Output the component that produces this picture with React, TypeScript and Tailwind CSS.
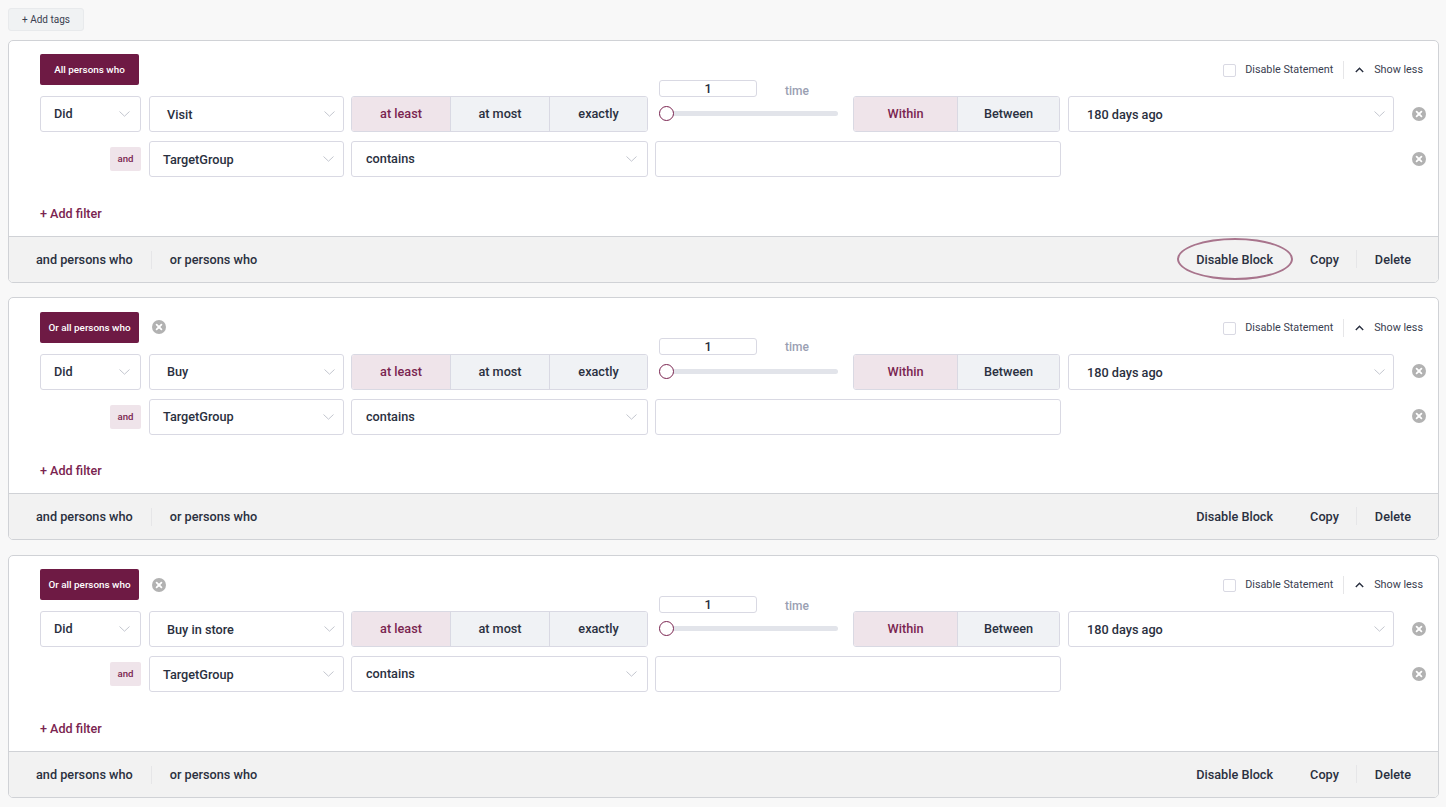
import React from "react";

function Chevron({ className = "" }: { className?: string }) {
  return (
    <svg width="11" height="6" viewBox="0 0 11 6" fill="none" className={className}>
      <path d="M0.5 0.5 L5.5 5.2 L10.5 0.5" stroke="#c3c6cf" strokeWidth="1" />
    </svg>
  );
}

function XCircle({ shift = "" }: { shift?: string }) {
  return (
    <svg width="14" height="14" viewBox="0 0 14 14" className={`shrink-0 ${shift}`}>
      <circle cx="7" cy="7" r="7" fill="#b2b2b2" />
      <path d="M4.6 4.6 L9.4 9.4 M9.4 4.6 L4.6 9.4" stroke="#fff" strokeWidth="1.8" strokeLinecap="round" />
    </svg>
  );
}

function Select({
  label,
  width,
  pad,
  shift = "",
  chevron = "pr-[8px]",
}: {
  label: string;
  width: string;
  pad: string;
  shift?: string;
  chevron?: string;
}) {
  return (
    <div className={`${width} ${pad} ${chevron} h-[36px] shrink-0 bg-white border border-[#d9d9e3] rounded-[3px] flex items-center justify-between`}>
      <span className={`text-[12.7px] font-medium text-[#2a3040] ${shift}`}>{label}</span>
      <Chevron />
    </div>
  );
}

function Segment({ items, widths }: { items: string[]; widths: string[] }) {
  return (
    <div className="flex h-[36px] shrink-0 rounded-[3px] border border-[#d9d9e3] overflow-hidden">
      {items.map((it, i) => (
        <div
          key={it}
          className={`${widths[i]} flex items-center justify-center text-[12.7px] font-medium ${i > 0 ? "border-l border-[#d9d9e3]" : ""} ${i === 0 ? "bg-[#efe4ea] text-[#7a2450]" : "bg-[#f0f2f5] text-[#2a3040]"}`}
        >
          {it}
        </div>
      ))}
    </div>
  );
}

function Divider() {
  return <div className="w-px h-[18px] bg-[#e6e6e8]" />;
}

function Card({
  badge,
  removable,
  event,
  mt,
  top,
  filterMt,
  sliderTop,
  sliderGap,
  timeShift,
  textShift,
  xShift = "",
  highlight,
}: {
  badge: string;
  removable?: boolean;
  event: string;
  mt: string;
  top: string;
  filterMt: string;
  sliderTop: string;
  sliderGap: string;
  timeShift: string;
  textShift: string;
  xShift?: string;
  highlight?: boolean;
}) {
  return (
    <div className={`${mt} h-[243px] rounded-[5px] border border-[#d0d2d6] bg-white overflow-hidden flex flex-col`}>
      <div className={`${top} h-[195px] shrink-0 pl-[31px] pr-[12px] flex flex-col`}>
        <div className="h-[31px] flex items-center">
          <div className="w-[99px] h-[31px] pt-px rounded-[2px] bg-[#6e1a44] text-white text-[9.9px] font-medium flex items-center justify-center">
            {badge}
          </div>
          {removable && (
            <div className="ml-[13px]">
              <XCircle shift={xShift} />
            </div>
          )}
          <div className="ml-auto mr-[3px] flex items-center">
            <div className="w-[13px] h-[13px] border border-[#d9d9e3] rounded-[2px] bg-white mt-px" />
            <span className="ml-[9px] text-[10.8px] text-[#3a4050] mt-px">Disable Statement</span>
            <div className="w-px h-[18px] bg-[#e6e6e8] ml-[10px] mr-[11px]" />
            <svg width="9" height="6" viewBox="0 0 9 6" fill="none">
              <path d="M0.8 5 L4.5 1.3 L8.2 5" stroke="#2a3040" strokeWidth="1.4" />
            </svg>
            <span className="ml-[10px] text-[10.8px] text-[#3a4050] mt-px">Show less</span>
          </div>
        </div>

        <div className="mt-[11px] flex items-center">
          <Select label="Did" width="w-[101px]" pad="pl-[13px]" chevron="pr-[10px]" />
          <Select label={event} width="w-[195px] ml-[8px]" pad="pl-[17px]" shift={textShift} chevron="pr-[8px]" />
          <div className="ml-[7px]">
            <Segment items={["at least", "at most", "exactly"]} widths={["w-[98px]", "w-[99px]", "w-[98px]"]} />
          </div>
          <div className={`${sliderTop} self-start ml-[11px] w-[179px] h-[36px] shrink-0 flex flex-col`}>
            <div className="h-[17px] flex items-center shrink-0">
              <div className="w-[98px] h-[17px] border border-[#d9d9e3] rounded-[3px] bg-white flex items-center justify-center text-[12.7px] font-medium text-[#2a3040]">
                1
              </div>
              <span className={`ml-[28px] text-[12px] leading-[12px] font-medium text-[#9a9fb2] ${timeShift}`}>time</span>
            </div>
            <div className={`${sliderGap} relative h-[15px] shrink-0 flex items-center`}>
              <div className="w-full h-[5px] rounded-full bg-[#e2e4ea]" />
              <div className="absolute left-0 top-0 w-[15px] h-[15px] rounded-full border-[1.5px] border-[#7a2450] bg-white" />
            </div>
          </div>
          <div className="ml-[15px]">
            <Segment items={["Within", "Between"]} widths={["w-[103px]", "w-[102px]"]} />
          </div>
          <Select label="180 days ago" width="w-[326px] ml-[8px]" pad="pl-[18px]" shift="mt-[2px]" chevron="pr-[8px]" />
          <div className="ml-[18px]">
            <XCircle shift={xShift} />
          </div>
        </div>

        <div className="mt-[9px] flex items-center">
          <div className="ml-[70px] w-[31px] h-[24px] rounded-[2px] bg-[#efe4ea] text-[#7a2450] text-[9.6px] font-medium flex items-center justify-center">
            and
          </div>
          <Select label="TargetGroup" width="w-[195px] ml-[8px]" pad="pl-[13px]" shift={textShift} chevron="pr-[9px]" />
          <Select label="contains" width="w-[297px] ml-[7px]" pad="pl-[14px]" chevron="pr-[10px]" />
          <div className="ml-[7px] w-[406px] h-[36px] bg-white border border-[#d9d9e3] rounded-[3px]" />
          <div className="ml-auto">
            <XCircle shift={xShift} />
          </div>
        </div>

        <div className={`${filterMt} text-[12.6px] font-medium text-[#7a2450] leading-[16px]`}>+ Add filter</div>
      </div>

      <div className="flex-1 border-t border-[#d0d2d6] bg-[#f2f2f2] pl-[27px] pr-[27px] flex items-center text-[12.7px] font-medium text-[#2a3040]">
        <span>and persons who</span>
        <div className="ml-[18px]">
          <Divider />
        </div>
        <span className="ml-[18px]">or persons who</span>
        <div className="ml-auto flex items-center">
          <div className="relative">
            <span>Disable Block</span>
            {highlight && (
              <div className="absolute left-[-19px] top-[-12px] w-[116px] h-[42px] rounded-[50%] border-2 border-[#a8748c]" />
            )}
          </div>
          <span className="ml-[37px]">Copy</span>
          <div className="ml-[17px]">
            <Divider />
          </div>
          <span className="ml-[18px]">Delete</span>
        </div>
      </div>
    </div>
  );
}

export default function App() {
  return (
    <div className="w-[1446px] h-[807px] overflow-hidden bg-[#f8f8f8] px-[8px] pt-[8px] font-['Roboto',sans-serif]">
      <div className="w-[76px] h-[23px] rounded-[3px] border border-[#e8eaec] bg-[#f0f2f3] text-[10px] text-[#3a4050] flex items-center justify-center">
        + Add tags
      </div>
      <div className="w-[1431px]">
        <Card mt="mt-[9px]" top="pt-[13px]" filterMt="mt-[29px]" sliderTop="-mt-[16px]" sliderGap="mt-[9px]" timeShift="mt-[5px]" textShift="mt-[2px]" badge="All persons who" event="Visit" highlight />
        <Card mt="mt-[14px]" top="pt-[14px]" filterMt="mt-[28px]" sliderTop="-mt-[16px]" sliderGap="mt-[9px]" timeShift="mt-[1px]" textShift="" xShift="-mt-[2px]" badge="Or all persons who" removable event="Buy" />
        <Card mt="mt-[15px]" top="pt-[13px]" filterMt="mt-[29px]" sliderTop="-mt-[15px]" sliderGap="mt-[8px]" timeShift="mt-[3px]" textShift="mt-[2px]" badge="Or all persons who" removable event="Buy in store" />
      </div>
    </div>
  );
}
